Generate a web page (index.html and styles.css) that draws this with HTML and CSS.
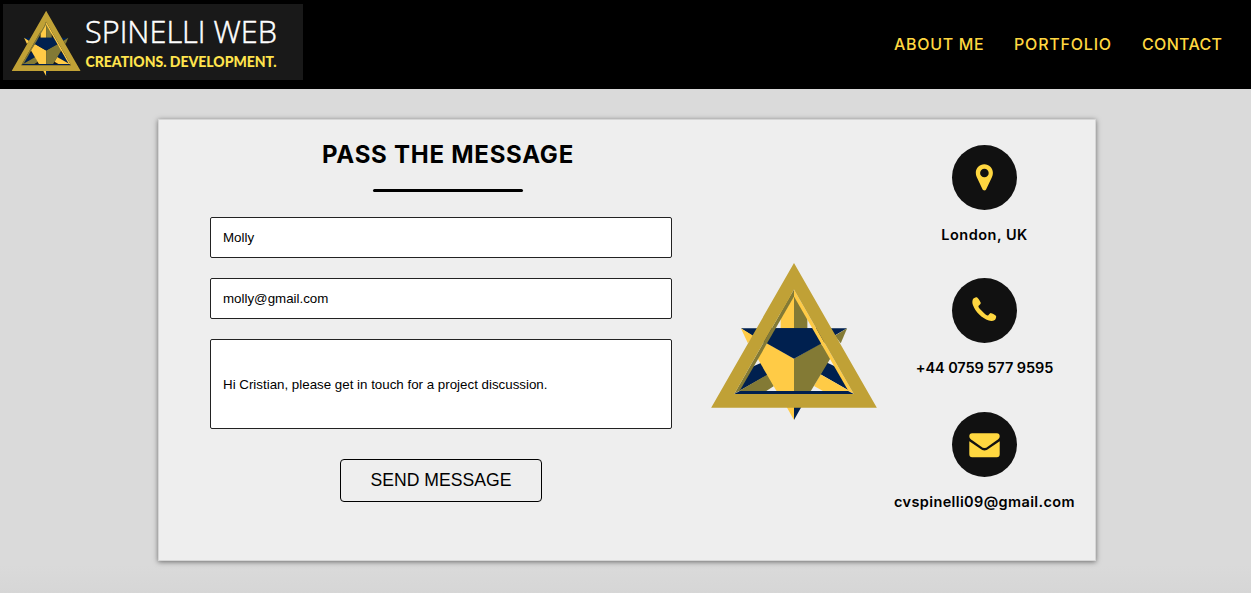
FILE: index.html
```html
<!DOCTYPE html>
<html lang="en">
<head>
<meta charset="utf-8">
<title>Spinelli Web - Contact</title>
<link rel="stylesheet" href="styles.css">
</head>
<body>
<header class="header">
  <a class="brand" href="#">
    <svg class="brand-svg" viewBox="0 0 300 76">
      <svg x="8.65" y="6.65" width="69" height="65.4" viewBox="34 24 496 470"><use href="#emblem"/></svg>
      <text class="brand-name" x="82" y="39" textLength="192" lengthAdjust="spacingAndGlyphs">SPINELLI WEB</text>
      <text class="brand-tag" x="82.5" y="63" textLength="191" lengthAdjust="spacingAndGlyphs">CREATIONS. DEVELOPMENT.</text>
    </svg>
  </a>
  <nav class="nav">
    <a class="nav-link about" href="#">ABOUT ME</a>
    <a class="nav-link portfolio" href="#">PORTFOLIO</a>
    <a class="nav-link contact" href="#">CONTACT</a>
  </nav>
</header>
<main class="card">
  <section class="message">
    <h1 class="title">PASS THE MESSAGE</h1>
    <div class="rule"></div>
    <form class="form">
      <input class="field" type="text" value="Molly">
      <input class="field" type="text" value="molly@gmail.com">
      <input class="field tall" type="text" value="Hi Cristian, please get in touch for a project discussion.">
      <button class="send" type="button">SEND MESSAGE</button>
    </form>
  </section>
  <div class="picture">
    <svg class="emblem" viewBox="34 24 496 470">
      <g id="emblem">
        <path fill="#ffcb46" d="M242 150L282 110V222H242z"/>
        <path fill="#837a35" d="M282 110L322 180V222H282z"/>
        <path fill="#00204f" d="M123 219H441L405 240L385 262H180L155 240z"/>
        <path fill="#ffcb46" d="M123 219L160 242L144 264zM260 455H282V494z"/>
        <path fill="#837a35" d="M441 219L404 242L422 264z"/>
        <path fill="#00204f" d="M282 455H304L282 494z"/>
        <path fill="#00204f" d="M116 408L152 337L186 322L204 359z"/>
        <path fill="#837a35" d="M116 408L204 357L222 392L198 408z"/>
        <path fill="#00204f" d="M450 408L412 337L380 322L361 357z"/>
        <path fill="#ffcb46" d="M450 408L361 357L342 392L370 408z"/>
        <path fill="#ffcb46" d="M202 264L282 311V408H230L170 305z"/>
        <path fill="#837a35" d="M362 264L282 311V408H332L394 305z"/>
        <path fill="#00204f" d="M200 219H364V265L282 311L200 264z"/>
        <path fill="#837a35" d="M282 103V124L120 406L103 416z"/>
        <path fill="#ffcb46" d="M282 103V124L444 406L461 416z"/>
        <path fill="#00204f" d="M103 416L120 407H444L461 416z"/>
        <path fill="#c0a136" fill-rule="evenodd" d="M282 24L530 457H34zM282 103L103 416H461z"/>
      </g>
    </svg>
  </div>
  <aside class="details">
    <div class="detail">
      <span class="disc"><svg class="glyph" viewBox="0 0 65 65"><path fill="#ffd740" fill-rule="evenodd" d="M32.3 19.2C27.5 19.2 23.8 23 23.8 27.8C23.8 29.4 24.1 30.7 24.7 31.9L30.5 44.2C31.2 45.8 33.5 45.8 34.2 44.2L40 31.9C40.6 30.7 40.9 29.4 40.9 27.8C40.9 23 37.1 19.2 32.3 19.2zM32.4 23.7A4.3 4.3 0 1 1 32.4 32.3A4.3 4.3 0 0 1 32.4 23.7z"/></svg></span>
      <p class="label place">London, UK</p>
    </div>
    <div class="detail">
      <span class="disc"><svg class="glyph" viewBox="0 0 65 65"><path fill="#ffd740" d="M24.6 19.3C23.6 19 21.4 20.2 20.9 21.2C20.1 23 20.2 25.2 21 27.3C23.6 34.2 29.8 40.3 36.8 42.5C38.9 43.2 41.2 43 42.8 42C43.8 41.3 44.4 39.2 44.1 38.1C43.8 37.4 39.8 35.1 38.8 35C37.6 34.9 36.7 37.7 35.6 37.6C34.1 37.5 27.1 30.7 26.4 28.8C26 27.6 28.9 26.4 28.8 25.1C28.8 24.4 26.1 19.7 24.6 19.3z"/></svg></span>
      <p class="label phone">+44 0759 577 9595</p>
    </div>
    <div class="detail">
      <span class="disc"><svg class="glyph" viewBox="0 0 65 65"><path fill="#ffd740" d="M20.2 21.2H44.8Q47.7 21.2 47.7 24.2C47.7 26.3 46 27.5 44.4 28.6L36 34.5Q32.5 37.5 29 34.5L20.6 28.6C19 27.5 17.3 26.3 17.3 24.2Q17.3 21.2 20.2 21.2zM17.3 29.3L28 36.6Q32.5 40.3 37 36.6L47.7 29.3V42.2Q47.7 45.2 44.8 45.2H20.2Q17.3 45.2 17.3 42.2z"/></svg></span>
      <p class="label email">cvspinelli09@gmail.com</p>
    </div>
  </aside>
</main>
</body>
</html>
```
FILE: styles.css
```css
* { box-sizing: border-box; }
body {
  margin: 0;
  height: 593px;
  overflow: hidden;
  background: linear-gradient(#dadada 0, #dadada 565px, #d6d6d6 593px);
  font-family: Inter, "Liberation Sans", sans-serif;
  color: #000;
}
.header {
  height: 89px;
  padding: 4px 29px 0 3px;
  background: #000;
  display: flex;
  justify-content: space-between;
}
.brand { width: 300px; height: 76px; background: #191919; }
.brand-svg { display: block; width: 300px; height: 76px; }
.brand-name { font: 300 31px "Open Sans", sans-serif; fill: #fff; stroke: #fff; stroke-width: 0.5px; }
.brand-tag { font: 900 14.5px Lato, sans-serif; fill: #ffe44d; }
.nav { display: flex; gap: 30px; height: 80px; align-items: center; }
.nav-link {
  font-size: 16px;
  font-weight: 500;
  color: #ffd740;
  text-decoration: none;
  white-space: nowrap;
}
.about { width: 90px; letter-spacing: 0.68px; }
.portfolio { width: 98px; letter-spacing: 0.8px; }
.contact { width: 80px; letter-spacing: 0.32px; }
.card {
  width: 938px;
  height: 442px;
  margin: 30px 0 0 158px;
  border: 1px solid #d6d6d6;
  background: #eee;
  box-shadow: 0 1px 5px rgba(0, 0, 0, 0.5);
  display: flex;
}
.message { width: 552px; padding: 19px 0 0 51px; }
.title {
  width: 476px;
  margin: 0;
  font-size: 24px;
  line-height: 32px;
  font-weight: 700;
  letter-spacing: 0.75px;
  text-align: center;
}
.rule { width: 150px; height: 3px; margin: 18px 0 0 163px; border-radius: 2px; background: #000; }
.form { width: 462px; margin-top: 25px; display: flex; flex-direction: column; gap: 20px; }
.field {
  width: 462px;
  height: 41px;
  padding: 0 12px;
  border: 1px solid #222;
  border-radius: 2px;
  background: #fff;
  color: #000;
  font: 13.33px "Liberation Sans", Arial, sans-serif;
}
.tall { height: 90px; }
.send {
  align-self: center;
  width: 202px;
  height: 43px;
  margin-top: 10px;
  padding: 0;
  border: 1px solid #000;
  border-radius: 4px;
  background: transparent;
  color: #000;
  font: 17.6px "Liberation Sans", Arial, sans-serif;
}
.picture { width: 167px; padding-top: 143px; }
.emblem { display: block; width: 166px; height: 157px; }
.details { width: 213px; padding-top: 25px; }
.detail { height: 133.4px; display: flex; flex-direction: column; align-items: center; }
.disc { width: 65px; height: 65px; border-radius: 50%; background: #111; }
.glyph { display: block; width: 65px; height: 65px; }
.label { margin: 15px 0 0; font-size: 14.5px; line-height: 20px; font-weight: 600; white-space: nowrap; }
.place { letter-spacing: 0.5px; }
.phone { letter-spacing: -0.08px; }
.email { letter-spacing: 0.38px; }
```
